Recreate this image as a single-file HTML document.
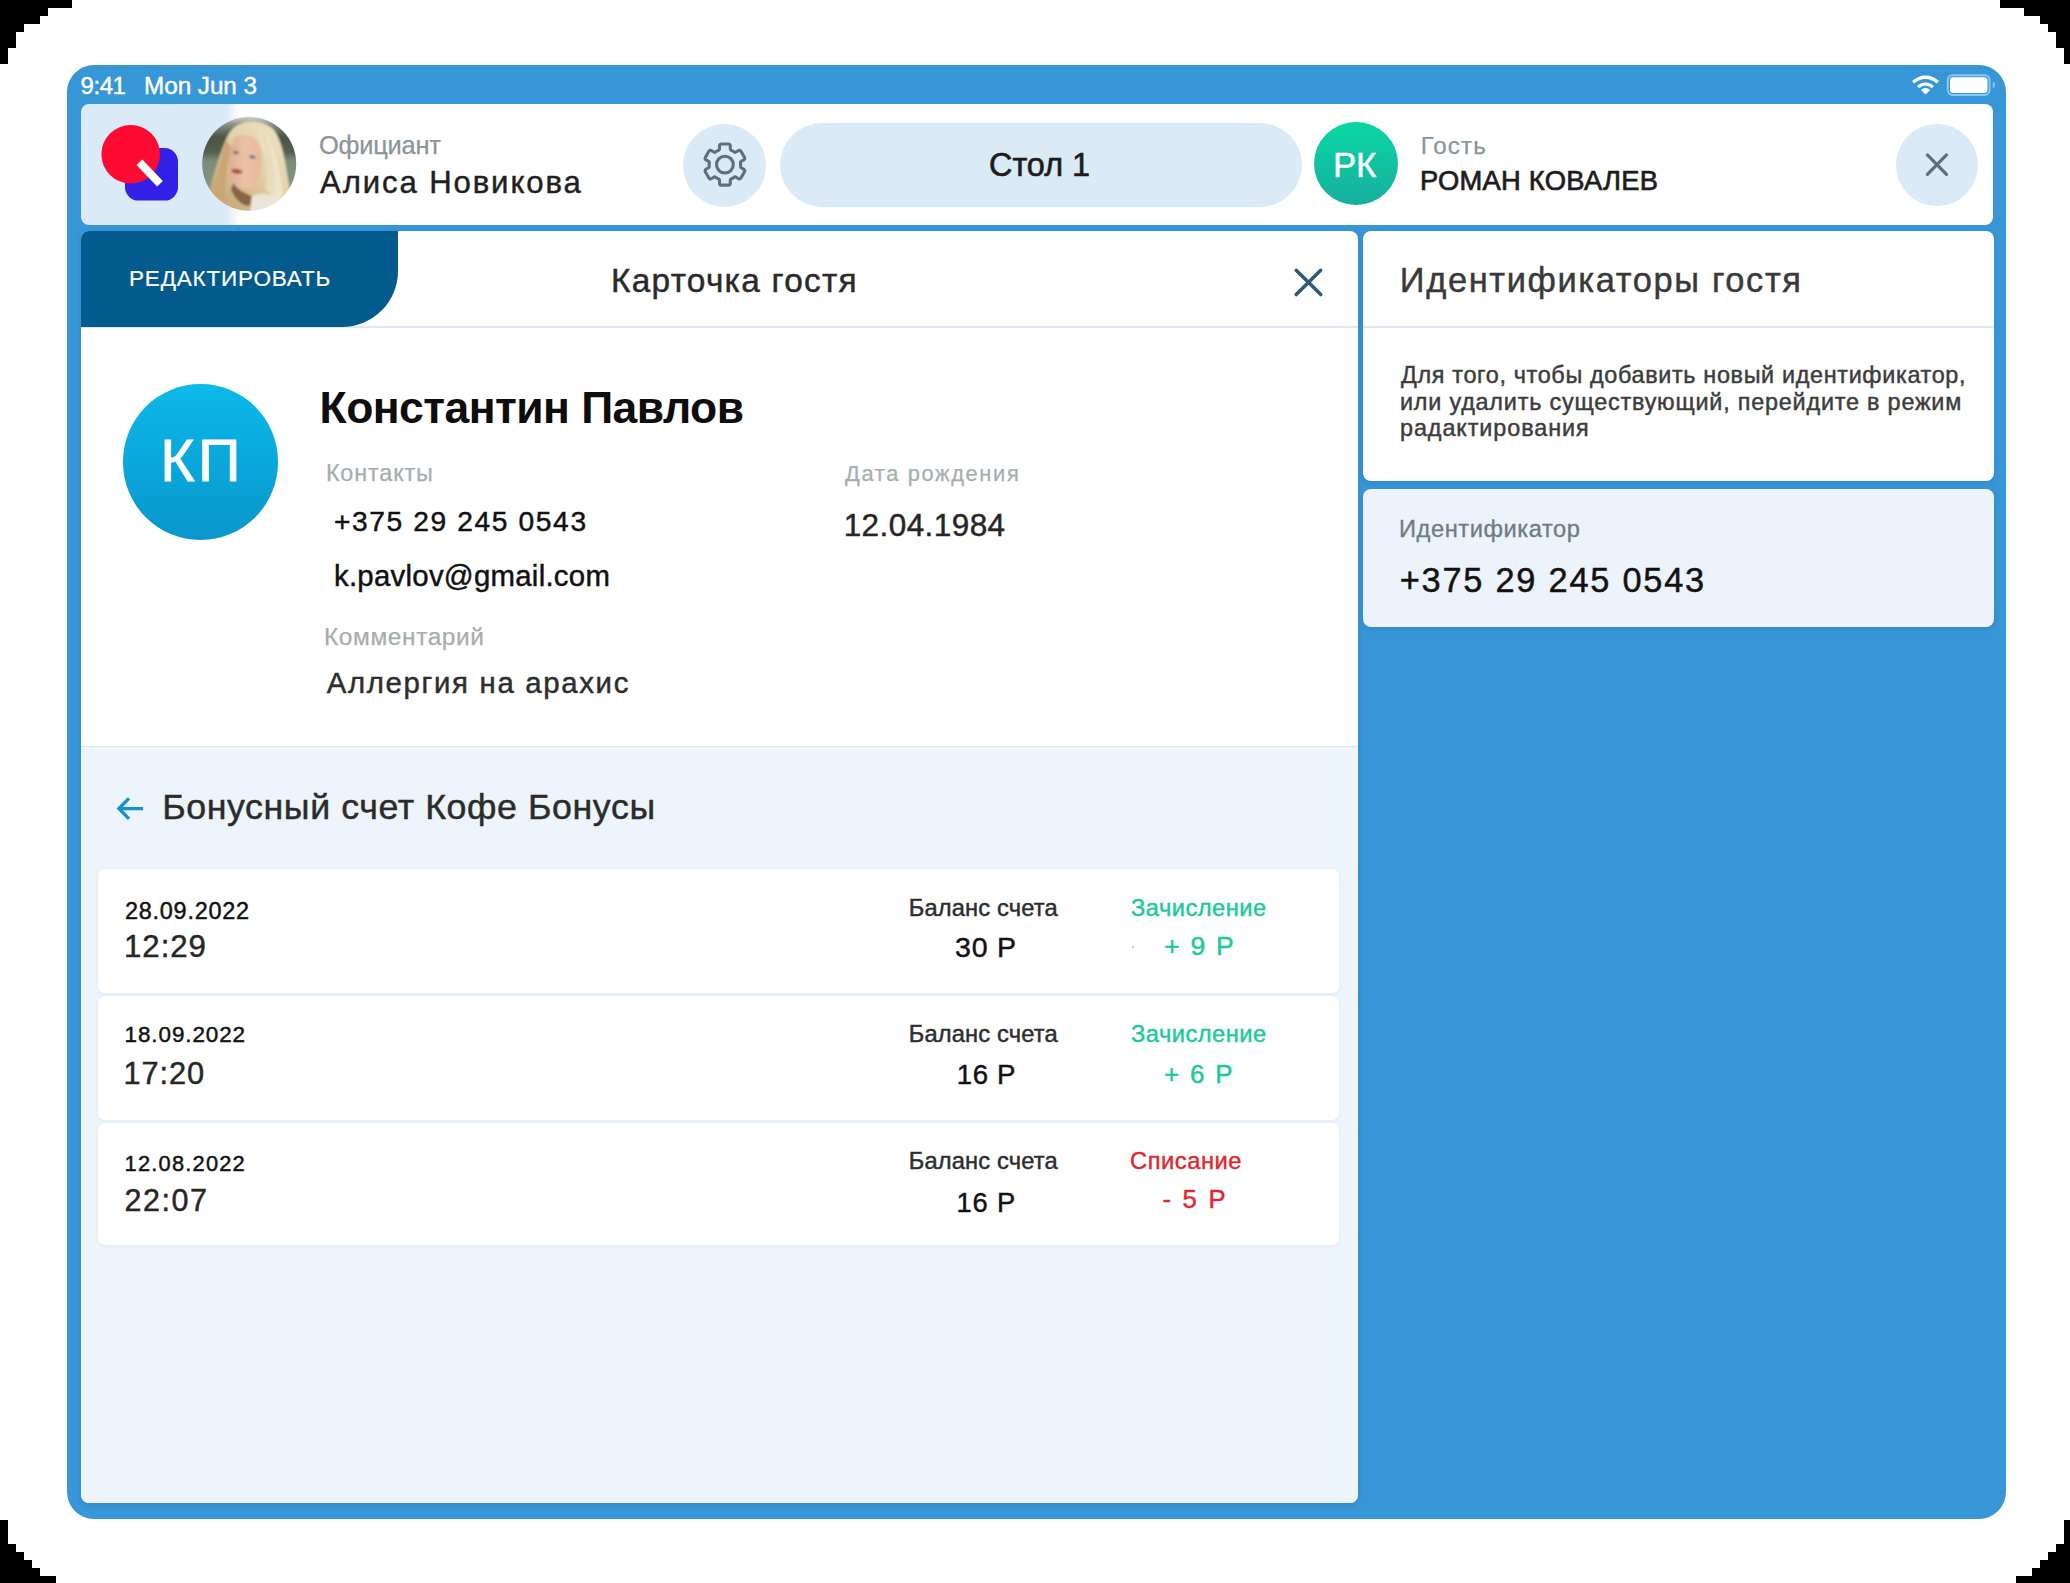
<!DOCTYPE html>
<html><head><meta charset="utf-8"><title>Guest card</title>
<style>
*{margin:0;padding:0;box-sizing:border-box}
html,body{width:2070px;height:1583px;overflow:hidden;background:#fff;font-family:"Liberation Sans",sans-serif}
.a{position:absolute}
.k{position:absolute;background:#000}
.t{position:absolute;white-space:nowrap;line-height:1}
svg{position:absolute;overflow:visible}
</style></head><body>
<div class="k" style="left:0px;top:0px;width:72px;height:8px"></div><div class="k" style="left:0px;top:8px;width:48px;height:8px"></div><div class="k" style="left:0px;top:16px;width:40px;height:8px"></div><div class="k" style="left:0px;top:24px;width:24px;height:8px"></div><div class="k" style="left:0px;top:32px;width:16px;height:16px"></div><div class="k" style="left:0px;top:48px;width:8px;height:16px"></div><div class="k" style="left:2000px;top:0px;width:70px;height:8px"></div><div class="k" style="left:2024px;top:8px;width:46px;height:8px"></div><div class="k" style="left:2040px;top:16px;width:30px;height:8px"></div><div class="k" style="left:2048px;top:24px;width:22px;height:8px"></div><div class="k" style="left:2056px;top:32px;width:14px;height:16px"></div><div class="k" style="left:2064px;top:48px;width:6px;height:16px"></div><div class="k" style="left:0px;top:1520px;width:8px;height:24px"></div><div class="k" style="left:0px;top:1544px;width:16px;height:8px"></div><div class="k" style="left:0px;top:1552px;width:24px;height:8px"></div><div class="k" style="left:0px;top:1560px;width:32px;height:8px"></div><div class="k" style="left:0px;top:1568px;width:40px;height:8px"></div><div class="k" style="left:0px;top:1576px;width:56px;height:7px"></div><div class="k" style="left:2064px;top:1520px;width:6px;height:24px"></div><div class="k" style="left:2056px;top:1544px;width:14px;height:8px"></div><div class="k" style="left:2048px;top:1552px;width:22px;height:8px"></div><div class="k" style="left:2040px;top:1560px;width:30px;height:8px"></div><div class="k" style="left:2032px;top:1568px;width:38px;height:8px"></div><div class="k" style="left:2016px;top:1576px;width:54px;height:7px"></div><div class="a" style="left:67px;top:65px;width:1939px;height:1454px;border-radius:27px;background:#3796d6"></div>
<div class="a" style="left:81px;top:104px;width:1912px;height:121.4px;border-radius:8px;overflow:hidden;background:linear-gradient(to right,#daeaf7 0,#daeaf7 145px,#fff 159px)"></div>
<svg style="left:0;top:0" width="2070" height="300"><rect x="125" y="148" width="53" height="52.6" rx="13.5" fill="#3320e6"/><circle cx="130.7" cy="154.3" r="29.3" fill="#ff0a32"/><line x1="139.4" y1="162.3" x2="160" y2="183.8" stroke="#fff" stroke-width="8"/></svg>
<svg style="left:0;top:0" width="10" height="10"><defs><clipPath id="avc"><circle cx="249.2" cy="163.8" r="47"/></clipPath><linearGradient id="avbg" x1="0" y1="116" x2="0" y2="211" gradientUnits="userSpaceOnUse"><stop offset="0" stop-color="#d9dad4"/><stop offset="0.09" stop-color="#8a8e84"/><stop offset="0.22" stop-color="#4d5348"/><stop offset="0.38" stop-color="#555f50"/><stop offset="0.47" stop-color="#7b8c78"/><stop offset="0.8" stop-color="#849782"/><stop offset="1" stop-color="#8f9c88"/></linearGradient><linearGradient id="avhair" x1="1" y1="0" x2="0" y2="1"><stop offset="0" stop-color="#f0e6cc"/><stop offset="0.45" stop-color="#e3d0a8"/><stop offset="1" stop-color="#bf9966"/></linearGradient><linearGradient id="avskin" x1="0" y1="0" x2="1" y2="0"><stop offset="0" stop-color="#dcae90"/><stop offset="0.5" stop-color="#ebc2a6"/><stop offset="1" stop-color="#e8b89c"/></linearGradient><filter id="avblur" x="-20%" y="-20%" width="140%" height="140%"><feGaussianBlur stdDeviation="1.1"/></filter></defs><g clip-path="url(#avc)"><g filter="url(#avblur)"><rect x="199.2" y="113.80000000000001" width="100" height="100" fill="url(#avbg)"/><path d="M240 124 C252 119 266 122 274 130 C284 144 286 170 290 190 C292 200 292 212 288 214 L232 214 C222 210 212 204 208 196 C212 180 218 160 224 144 C228 134 232 127 240 124Z" fill="url(#avhair)"/><path d="M262 128 C272 136 278 160 282 185 C284 198 282 206 278 210 L270 210 C272 190 268 160 258 134Z" fill="#efe4c8"/><path d="M226 140 C220 160 214 185 212 200 L226 208 C224 190 226 165 232 148Z" fill="#c9a775"/><path d="M235 137 C244 132 256 135 260 146 C263 160 262 176 255 185 C248 191 237 190 231 182 C227 172 228 150 235 137Z" fill="url(#avskin)"/><path d="M258 132 C266 142 268 165 266 190 L274 196 C276 170 272 145 264 130Z" fill="#e9dcbc"/><path d="M233 183 C238 190 246 194 252 196 L250 206 C242 206 236 200 231 190Z" fill="#7a5638" opacity="0.85"/><ellipse cx="236" cy="152.5" rx="3.2" ry="1.5" fill="#7a776a" transform="rotate(10 236 152.5)"/><ellipse cx="252.5" cy="157" rx="3.2" ry="1.6" fill="#6f7378" transform="rotate(15 252.5 157)"/><path d="M231.5 169.5 C235 168 240 169 243 172 C240 174.5 235 174.5 232 172Z" fill="#b04f4d"/><path d="M252 196 C260 192 272 193 280 200 L282 214 L250 214Z" fill="#ece3d9"/></g></g></svg>
<div class="a" style="left:683px;top:123.5px;width:83px;height:83px;border-radius:50%;background:#daeaf7"></div>
<svg style="left:0;top:0" width="10" height="10"><path d="M719.21 149.97Q719.66 149.80 719.56 147.60L719.49 146.22Q719.39 144.03 721.59 144.03L728.21 144.03Q730.41 144.03 730.31 146.22L730.24 147.60Q730.14 149.80 730.59 149.97L731.03 150.15L731.91 150.55L732.75 151.00L733.57 151.51L734.35 152.06L734.72 152.36Q735.10 152.66 736.95 151.47L738.11 150.73Q739.96 149.54 741.06 151.44L744.37 157.18Q745.47 159.09 743.52 160.10L742.29 160.73Q740.34 161.74 740.41 162.21L740.48 162.69L740.57 163.64L740.60 164.60L740.57 165.56L740.48 166.51L740.41 166.99Q740.34 167.46 742.29 168.47L743.52 169.10Q745.47 170.11 744.37 172.02L741.06 177.76Q739.96 179.66 738.11 178.47L736.95 177.73Q735.10 176.54 734.72 176.84L734.35 177.14L733.57 177.69L732.75 178.20L731.91 178.65L731.03 179.05L730.59 179.23Q730.14 179.40 730.24 181.60L730.31 182.98Q730.41 185.17 728.21 185.17L721.59 185.17Q719.39 185.17 719.49 182.98L719.56 181.60Q719.66 179.40 719.21 179.23L718.77 179.05L717.89 178.65L717.05 178.20L716.23 177.69L715.45 177.14L715.08 176.84Q714.70 176.54 712.85 177.73L711.69 178.47Q709.84 179.66 708.74 177.76L705.43 172.02Q704.33 170.11 706.28 169.10L707.51 168.47Q709.46 167.46 709.39 166.99L709.32 166.51L709.23 165.56L709.20 164.60L709.23 163.64L709.32 162.69L709.39 162.21Q709.46 161.74 707.51 160.73L706.28 160.10Q704.33 159.09 705.43 157.18L708.74 151.44Q709.84 149.54 711.69 150.73L712.85 151.47Q714.70 152.66 715.08 152.36L715.45 152.06L716.23 151.51L717.05 151.00L717.89 150.55L718.77 150.15Z" stroke="#5e6f7a" stroke-width="3.1" stroke-linejoin="round" fill="none"/><circle cx="724.9" cy="164.6" r="8.4" stroke="#5e6f7a" stroke-width="3.1" fill="none"/></svg>
<div class="a" style="left:780px;top:123px;width:522px;height:83.5px;border-radius:42px;background:#daeaf7"></div>
<div class="a" style="left:1314.4px;top:121.7px;width:83.3px;height:83px;border-radius:50%;background:linear-gradient(to bottom,#09d7a3,#17ae9f)"></div>
<div class="a" style="left:1896px;top:123.5px;width:82px;height:82.5px;border-radius:50%;background:#daeaf7"></div>
<svg style="left:0;top:0" width="10" height="10"><path d="M1927.4 154.9L1946.5 174.4M1946.5 154.9L1927.4 174.4" stroke="#5d6f7b" stroke-width="3.2" stroke-linecap="round" fill="none"/></svg>
<div class="a" style="left:81px;top:231px;width:1276.5px;height:1272.4px;border-radius:8px;overflow:hidden;background:#fff;box-shadow:0 2px 5px rgba(0,40,80,.12)"><div class="a" style="left:0;top:95px;width:100%;height:1.5px;background:#dce9f5"></div><div class="a" style="left:0;top:0;width:316.5px;height:96px;background:#035a8c;border-radius:4px 0 56px 0"></div><div class="a" style="left:0;top:515px;width:100%;height:757px;background:#edf4fb;border-top:1.5px solid #d9e8f4"></div><div class="a" style="left:17px;top:638px;width:1240.5px;height:123.5px;border-radius:7px;background:#fff;box-shadow:0 1px 4px rgba(0,60,120,.06)"></div><div class="a" style="left:17px;top:765.3px;width:1240.5px;height:123.6px;border-radius:7px;background:#fff;box-shadow:0 1px 4px rgba(0,60,120,.06)"></div><div class="a" style="left:17px;top:892.1px;width:1240.5px;height:121.9px;border-radius:7px;background:#fff;box-shadow:0 1px 4px rgba(0,60,120,.06)"></div></div>
<svg style="left:0;top:0" width="10" height="10"><path d="M1296.2 270.3L1320.8 294.6M1320.7 270.3L1296.2 294.6" stroke="#2c5a79" stroke-width="3.5" stroke-linecap="round" fill="none"/></svg>
<div class="a" style="left:122.7px;top:384.4px;width:155.2px;height:155.3px;border-radius:50%;background:linear-gradient(to bottom,#0bb9e9,#0996cc)"></div>
<svg style="left:0;top:0" width="10" height="10"><path d="M129 798.3L118.9 808.6L129 818.9M119.5 808.6H143.1" stroke="#1591d2" stroke-width="3.3" fill="none"/></svg>
<div class="a" style="left:1131.5px;top:946px;width:2px;height:2px;background:#7fd9c0;border-radius:1px"></div>
<div class="a" style="left:1363px;top:231px;width:630.5px;height:249.5px;border-radius:8px;overflow:hidden;background:#fff;box-shadow:0 2px 5px rgba(0,40,80,.12)"><div class="a" style="left:0;top:95px;width:100%;height:1.5px;background:#dce9f5"></div></div>
<div class="a" style="left:1363px;top:489px;width:630.5px;height:138px;border-radius:8px;background:#ecf3fb;box-shadow:0 2px 5px rgba(0,40,80,.12)"></div>
<svg style="left:0;top:0" width="10" height="10"><rect x="1947.8" y="75.2" width="41.8" height="19.8" rx="5" fill="none" stroke="#8cc8f2" stroke-width="2"/><rect x="1950" y="77.2" width="37.5" height="15.8" rx="3.2" fill="#fff"/><path d="M1992.8 81.4a3.6 3.6 0 0 1 0 6.6z" fill="#8cc8f2"/><path d="M1913.27 82.27A17.3 17.3 0 0 1 1937.73 82.27" stroke="#fff" stroke-width="3.4" fill="none"/><path d="M1918.08 87.08A10.5 10.5 0 0 1 1932.92 87.08" stroke="#fff" stroke-width="3.2" fill="none"/><path d="M1925.5 94.5L1920.90 89.90A6.5 6.5 0 0 1 1930.10 89.90z" fill="#fff"/></svg><div class="t" id="st1" style="left:80.60px;top:73.76px;font-size:24.03px;font-weight:400;color:#ffffff;letter-spacing:-0.462px;-webkit-text-stroke:0.45px #ffffff;">9:41</div>
<div class="t" id="st2" style="left:144.00px;top:73.56px;font-size:24.27px;font-weight:400;color:#ffffff;letter-spacing:-0.039px;-webkit-text-stroke:0.45px #ffffff;">Mon Jun 3</div>
<div class="t" id="h1" style="left:319.00px;top:133.07px;font-size:25.44px;font-weight:400;color:#8a9598;letter-spacing:-0.228px;-webkit-text-stroke:0.25px #8a9598;">Официант</div>
<div class="t" id="h2" style="left:320.00px;top:167.27px;font-size:31.1px;font-weight:400;color:#1f1f1f;letter-spacing:1.902px;-webkit-text-stroke:0.45px #1f1f1f;">Алиса Новикова</div>
<div class="t" id="h3" style="left:989.00px;top:148.86px;font-size:32.41px;font-weight:400;color:#1c1c1c;letter-spacing:-0.021px;-webkit-text-stroke:0.6px #1c1c1c;">Стол 1</div>
<div class="t" id="h4" style="left:1333.00px;top:147.67px;font-size:34.88px;font-weight:400;color:#ffffff;letter-spacing:-0.261px;-webkit-text-stroke:0.45px #ffffff;">РК</div>
<div class="t" id="h5" style="left:1420.80px;top:133.77px;font-size:24.13px;font-weight:400;color:#8a9598;letter-spacing:1.105px;-webkit-text-stroke:0.25px #8a9598;">Гость</div>
<div class="t" id="h6" style="left:1420.00px;top:167.27px;font-size:27.33px;font-weight:400;color:#1c1c1c;letter-spacing:0.276px;-webkit-text-stroke:0.7px #1c1c1c;">РОМАН КОВАЛЕВ</div>
<div class="t" id="e1" style="left:129.00px;top:267.73px;font-size:22.53px;font-weight:400;color:#ffffff;letter-spacing:0.819px;-webkit-text-stroke:0.2px #ffffff;">РЕДАКТИРОВАТЬ</div>
<div class="t" id="c1" style="left:611.00px;top:263.90px;font-size:33.43px;font-weight:400;color:#2a2a2a;letter-spacing:1.246px;-webkit-text-stroke:0.45px #2a2a2a;">Карточка гостя</div>
<div class="t" id="r1" style="left:1399.80px;top:263.24px;font-size:34.45px;font-weight:400;color:#393939;letter-spacing:1.617px;-webkit-text-stroke:0.45px #393939;">Идентификаторы гостя</div>
<div class="t" id="p1" style="left:1401.00px;top:364.09px;font-size:23.4px;font-weight:400;color:#3c3c3c;letter-spacing:0.657px;-webkit-text-stroke:0.45px #3c3c3c;">Для того, чтобы добавить новый идентификатор,</div>
<div class="t" id="p2" style="left:1400.00px;top:391.29px;font-size:23.4px;font-weight:400;color:#3c3c3c;letter-spacing:0.788px;-webkit-text-stroke:0.45px #3c3c3c;">или удалить существующий, перейдите в режим</div>
<div class="t" id="p3" style="left:1400.00px;top:416.79px;font-size:23.4px;font-weight:400;color:#3c3c3c;letter-spacing:0.914px;-webkit-text-stroke:0.45px #3c3c3c;">радактирования</div>
<div class="t" id="r2" style="left:1399.00px;top:517.85px;font-size:23.69px;font-weight:400;color:#6e7b82;letter-spacing:0.550px;-webkit-text-stroke:0.3px #6e7b82;">Идентификатор</div>
<div class="t" id="r3" style="left:1399.80px;top:562.99px;font-size:34.39px;font-weight:400;color:#111111;letter-spacing:1.745px;-webkit-text-stroke:0.45px #111111;">+375 29 245 0543</div>
<div class="t" id="g0" style="left:160.20px;top:430.72px;font-size:59.16px;font-weight:400;color:#ffffff;letter-spacing:3.340px;-webkit-text-stroke:0.9px #ffffff;">КП</div>
<div class="t" id="g1" style="left:319.60px;top:385.55px;font-size:44.48px;font-weight:700;color:#0d0d0d;letter-spacing:-0.548px;">Константин Павлов</div>
<div class="t" id="g2" style="left:325.90px;top:461.99px;font-size:23.4px;font-weight:400;color:#a6adae;letter-spacing:0.854px;-webkit-text-stroke:0.25px #a6adae;">Контакты</div>
<div class="t" id="g3" style="left:334.00px;top:506.53px;font-size:28.2px;font-weight:400;color:#111111;letter-spacing:1.600px;-webkit-text-stroke:0.45px #111111;">+375 29 245 0543</div>
<div class="t" id="g4" style="left:334.00px;top:560.81px;font-size:29.4px;font-weight:400;color:#111111;letter-spacing:0.253px;-webkit-text-stroke:0.45px #111111;">k.pavlov@gmail.com</div>
<div class="t" id="g5" style="left:324.00px;top:624.93px;font-size:24.42px;font-weight:400;color:#a6adae;letter-spacing:0.621px;-webkit-text-stroke:0.25px #a6adae;">Комментарий</div>
<div class="t" id="g6" style="left:326.70px;top:667.95px;font-size:29.36px;font-weight:400;color:#2d2d2d;letter-spacing:1.681px;-webkit-text-stroke:0.45px #2d2d2d;">Аллергия на арахис</div>
<div class="t" id="g7" style="left:845.00px;top:463.25px;font-size:21.8px;font-weight:400;color:#a6adae;letter-spacing:1.662px;-webkit-text-stroke:0.25px #a6adae;">Дата рождения</div>
<div class="t" id="g8" style="left:843.70px;top:509.93px;font-size:31.51px;font-weight:400;color:#262626;letter-spacing:0.418px;-webkit-text-stroke:0.45px #262626;">12.04.1984</div>
<div class="t" id="b0" style="left:162.20px;top:790.13px;font-size:35.76px;font-weight:400;color:#2b2b2b;letter-spacing:0.581px;-webkit-text-stroke:0.45px #2b2b2b;">Бонусный счет Кофе Бонусы</div>
<div class="t" id="d1" style="left:125.00px;top:900.05px;font-size:23.45px;font-weight:400;color:#111111;letter-spacing:0.748px;-webkit-text-stroke:0.45px #111111;">28.09.2022</div>
<div class="t" id="t1" style="left:124.00px;top:930.77px;font-size:31.22px;font-weight:400;color:#262626;letter-spacing:0.960px;-webkit-text-stroke:0.45px #262626;">12:29</div>
<div class="t" id="l1" style="left:908.70px;top:896.85px;font-size:23.69px;font-weight:400;color:#2d2d2d;letter-spacing:0.154px;-webkit-text-stroke:0.45px #2d2d2d;">Баланс счета</div>
<div class="t" id="v1" style="left:955.00px;top:933.48px;font-size:28.49px;font-weight:400;color:#111111;letter-spacing:0.801px;-webkit-text-stroke:0.45px #111111;">30 Р</div>
<div class="t" id="s1" style="left:1131.00px;top:896.85px;font-size:23.69px;font-weight:400;color:#1dc99b;letter-spacing:0.479px;-webkit-text-stroke:0.45px #1dc99b;">Зачисление</div>
<div class="t" id="a1" style="left:1164.20px;top:933.07px;font-size:26.62px;font-weight:400;color:#1dc99b;letter-spacing:1.669px;-webkit-text-stroke:0.45px #1dc99b;">+ 9 Р</div>
<div class="t" id="d2" style="left:124.60px;top:1023.60px;font-size:22.45px;font-weight:400;color:#111111;letter-spacing:0.909px;-webkit-text-stroke:0.45px #111111;">18.09.2022</div>
<div class="t" id="t2" style="left:123.60px;top:1058.84px;font-size:30.79px;font-weight:400;color:#262626;letter-spacing:0.873px;-webkit-text-stroke:0.45px #262626;">17:20</div>
<div class="t" id="l2" style="left:908.70px;top:1022.75px;font-size:23.69px;font-weight:400;color:#2d2d2d;letter-spacing:0.154px;-webkit-text-stroke:0.45px #2d2d2d;">Баланс счета</div>
<div class="t" id="v2" style="left:956.80px;top:1061.11px;font-size:27.63px;font-weight:400;color:#111111;letter-spacing:0.599px;-webkit-text-stroke:0.45px #111111;">16 Р</div>
<div class="t" id="s2" style="left:1131.00px;top:1022.75px;font-size:23.69px;font-weight:400;color:#1dc99b;letter-spacing:0.479px;-webkit-text-stroke:0.45px #1dc99b;">Зачисление</div>
<div class="t" id="a2" style="left:1163.90px;top:1061.36px;font-size:26.04px;font-weight:400;color:#1dc99b;letter-spacing:1.814px;-webkit-text-stroke:0.45px #1dc99b;">+ 6 Р</div>
<div class="t" id="d3" style="left:124.60px;top:1153.49px;font-size:21.87px;font-weight:400;color:#111111;letter-spacing:1.195px;-webkit-text-stroke:0.45px #111111;">12.08.2022</div>
<div class="t" id="t3" style="left:124.60px;top:1185.18px;font-size:30.5px;font-weight:400;color:#262626;letter-spacing:1.510px;-webkit-text-stroke:0.45px #262626;">22:07</div>
<div class="t" id="l3" style="left:908.70px;top:1149.55px;font-size:23.69px;font-weight:400;color:#2d2d2d;letter-spacing:0.154px;-webkit-text-stroke:0.45px #2d2d2d;">Баланс счета</div>
<div class="t" id="v3" style="left:956.40px;top:1189.26px;font-size:27.34px;font-weight:400;color:#111111;letter-spacing:0.870px;-webkit-text-stroke:0.45px #111111;">16 Р</div>
<div class="t" id="s3" style="left:1130.00px;top:1149.55px;font-size:23.69px;font-weight:400;color:#db2a31;letter-spacing:0.543px;-webkit-text-stroke:0.45px #db2a31;">Списание</div>
<div class="t" id="a3" style="left:1162.40px;top:1186.72px;font-size:25.61px;font-weight:400;color:#db2a31;letter-spacing:2.250px;-webkit-text-stroke:0.45px #db2a31;">- 5 Р</div>
</body></html>
